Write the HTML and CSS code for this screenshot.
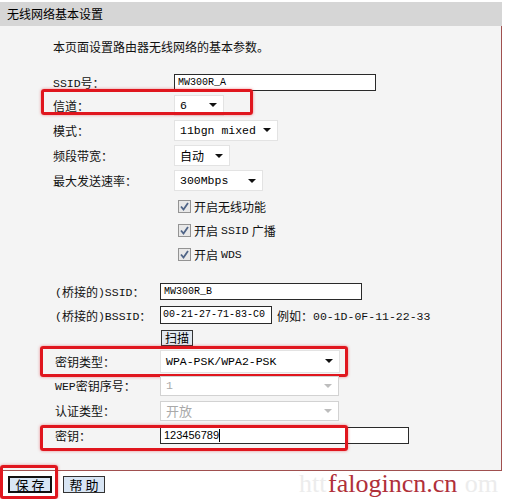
FILE: index.html
```html
<!DOCTYPE html>
<html lang="zh-CN">
<head>
    <meta charset="UTF-8">
    <title>无线网络基本设置</title>
    <link rel="stylesheet" href="styles.css">
</head>
<body>
    <div class="panel">
        <div class="title">无线网络基本设置</div>
        <div class="content">
            <p class="intro">本页面设置路由器无线网络的基本参数。</p>

            <div class="form form-main">
                <div class="row">
                    <span class="label"><span class="en">SSID</span>号：</span>
                    <div class="text w-ssid">MW300R_A</div>
                </div>
                <div class="row mark mark-channel">
                    <span class="label">信道：</span>
                    <div class="sel w-channel"><span>6</span><i class="arrow"></i></div>
                </div>
                <div class="row">
                    <span class="label">模式：</span>
                    <div class="sel w-mode"><span>11bgn mixed</span><i class="arrow"></i></div>
                </div>
                <div class="row">
                    <span class="label">频段带宽：</span>
                    <div class="sel w-band"><span class="cjk">自动</span><i class="arrow"></i></div>
                </div>
                <div class="row">
                    <span class="label">最大发送速率：</span>
                    <div class="sel w-rate"><span>300Mbps</span><i class="arrow"></i></div>
                </div>
                <div class="row">
                    <span class="label"></span>
                    <span class="check"><svg width="13" height="13" viewBox="0 0 13 13"><rect x="0.5" y="0.5" width="12" height="12" fill="#e8e8e8" stroke="#939393"/><path d="M3 6.5 L5.5 9.5 L10 3" fill="none" stroke="#4f6487" stroke-width="1.8"/></svg>开启无线功能</span>
                </div>
                <div class="row">
                    <span class="label"></span>
                    <span class="check"><svg width="13" height="13" viewBox="0 0 13 13"><rect x="0.5" y="0.5" width="12" height="12" fill="#e8e8e8" stroke="#939393"/><path d="M3 6.5 L5.5 9.5 L10 3" fill="none" stroke="#4f6487" stroke-width="1.8"/></svg>开启<span class="en">SSID</span>广播</span>
                </div>
                <div class="row">
                    <span class="label"></span>
                    <span class="check"><svg width="13" height="13" viewBox="0 0 13 13"><rect x="0.5" y="0.5" width="12" height="12" fill="#e8e8e8" stroke="#939393"/><path d="M3 6.5 L5.5 9.5 L10 3" fill="none" stroke="#4f6487" stroke-width="1.8"/></svg>开启<span class="en">WDS</span></span>
                </div>
            </div>

            <div class="form form-bridge">
                <div class="row">
                    <span class="label"><span class="en">(</span>桥接的<span class="en">)SSID</span>：</span>
                    <div class="text w-bssid-name">MW300R_B</div>
                </div>
                <div class="row">
                    <span class="label"><span class="en">(</span>桥接的<span class="en">)BSSID</span>：</span>
                    <div class="text w-bssid">00-21-27-71-83-C0</div>
                    <span class="hint">例如：<span class="en">00-1D-0F-11-22-33</span></span>
                </div>
                <div class="row">
                    <span class="label"></span>
                    <button class="btn btn-scan">扫描</button>
                </div>
                <div class="row mark mark-type">
                    <span class="label">密钥类型：</span>
                    <div class="sel w-type"><span>WPA-PSK/WPA2-PSK</span><i class="arrow"></i></div>
                </div>
                <div class="row">
                    <span class="label"><span class="en">WEP</span>密钥序号：</span>
                    <div class="sel sel-off w-wep"><span>1</span><i class="arrow"></i></div>
                </div>
                <div class="row">
                    <span class="label">认证类型：</span>
                    <div class="sel sel-off w-auth"><span class="cjk">开放</span><i class="arrow"></i></div>
                </div>
                <div class="row mark mark-key">
                    <span class="label">密钥：</span>
                    <div class="text text-key w-key">123456789<i class="caret"></i></div>
                </div>
            </div>
        </div>

        <div class="footer">
            <button class="btn btn-save">保 存</button>
            <button class="btn btn-help">帮 助</button>
            <div class="watermark">
                <span class="wm-faint">htt</span>
                <span class="wm-faint wm-end">om</span>
                <span class="wm-text">falogincn.cn</span>
            </div>
        </div>
    </div>
</body>
</html>
```

FILE: styles.css
```css
body {
    margin: 0;
    background: #fff;
    color: #111;
    font-family: "Noto Sans CJK SC", sans-serif;
    font-size: 12px;
}
.panel {
    width: 502px;
    padding-top: 2px;
}
.title {
    height: 24px;
    line-height: 24px;
    padding-left: 7px;
    background: #d6d6d6;
    color: #000;
}
.content {
    background: #f4f4f4;
    border-right: 1px solid #a0504f;
    border-bottom: 1px solid #a0504f;
    padding: 12px 0 22px;
}
.intro {
    margin: 0 0 15px 53px;
    line-height: 18px;
}
.en {
    font-family: "Liberation Mono", monospace;
    font-size: 11.5px;
    vertical-align: 1px;
}
.form {
    display: grid;
}
.form-main {
    grid-template-rows: 22px 24px 26px 25px 25px 26px 23px 24px;
    padding-left: 53px;
}
.form-bridge {
    grid-template-rows: 24px 24px 22px 24px 25px 25px 25px;
    padding-left: 55px;
    margin-top: 13px;
}
.row {
    display: flex;
    align-items: center;
    position: relative;
}
.form-main .label {
    width: 121px;
}
.form-bridge .label {
    width: 105px;
}

/* text inputs */
.text {
    box-sizing: border-box;
    height: 17px;
    line-height: 15px;
    padding: 0 3px;
    background: #fff;
    border: 1px solid #2a2a2a;
    font-family: "Liberation Mono", monospace;
    font-size: 10px;
    color: #000;
    white-space: nowrap;
    overflow: hidden;
}
.text-key {
    font-family: "Liberation Sans", sans-serif;
    font-size: 11px;
}
.caret {
    display: inline-block;
    width: 1px;
    height: 13px;
    background: #000;
    vertical-align: -3px;
}
.w-ssid { width: 202px; }
.w-bssid-name { width: 202px; }
.w-bssid { width: 112px; height: 18px; line-height: 16px; padding: 0 2px; }
.w-key { width: 249px; }
.hint {
    margin-left: 5px;
    white-space: nowrap;
}

/* selects */
.sel {
    box-sizing: border-box;
    display: flex;
    align-items: center;
    justify-content: space-between;
    height: 21px;
    padding: 0 6px 0 5px;
    background: #fff;
    border: 1px solid #e3e3e3;
    font-family: "Liberation Mono", "Noto Sans CJK SC", monospace;
    font-size: 11.5px;
    color: #000;
}
.sel .cjk {
    font-family: "Noto Sans CJK SC", sans-serif;
    font-size: 12px;
}
.arrow {
    width: 0;
    height: 0;
    border-left: 4px solid transparent;
    border-right: 4px solid transparent;
    border-top: 4px solid #111;
}
.sel-off {
    height: 20px;
    color: #a9a9a9;
    border-color: #d2d2d2;
}
.sel-off .cjk {
    font-size: 13px;
}
.sel-off .arrow {
    border-top-color: #bdbdbd;
}
.w-channel { width: 50px; }
.w-mode { width: 104px; }
.w-band { width: 56px; }
.w-rate { width: 89px; }
.w-type { width: 180px; height: 23px; }
.w-wep { width: 179px; }
.w-auth { width: 179px; }

/* checkboxes */
.check {
    display: flex;
    align-items: center;
    gap: 3px;
    margin-left: 4px;
}

/* buttons */
.btn {
    box-sizing: border-box;
    height: 17px;
    padding: 0;
    background: #d8e5f4;
    border: 1px solid #333;
    font-family: "Noto Sans CJK SC", sans-serif;
    font-size: 13px;
    line-height: 14px;
    color: #000;
}
.btn-scan {
    width: 32px;
    height: 16px;
    margin-left: 1px;
    font-size: 12px;
    background: #e2e9f1;
}
.btn-save {
    width: 44px;
    border: 2px solid #111;
}
.btn-help {
    width: 42px;
}

/* red annotation frames */
.mark::after,
.btn-save::after {
    content: "";
    position: absolute;
    border: 3px solid #e0161e;
    border-radius: 3px;
    box-shadow: 0 0 3px rgba(224, 22, 30, 0.5);
}
.mark-channel::after {
    left: -12px;
    top: -4px;
    bottom: 2px;
    width: 206px;
}
.mark-type::after {
    left: -15px;
    top: -3px;
    bottom: -4px;
    width: 302px;
}
.mark-key::after {
    left: -15px;
    top: 2px;
    bottom: -3px;
    width: 302px;
}
.btn-save {
    position: relative;
}
.btn-save::after {
    left: -10px;
    top: -13px;
    width: 52px;
    height: 28px;
}

/* footer */
.footer {
    position: relative;
    box-sizing: border-box;
    height: 28px;
    padding: 5px 0 0 8px;
    display: flex;
    align-items: flex-start;
    gap: 11px;
}
.watermark {
    position: absolute;
    left: 285px;
    top: 2px;
    width: 215px;
    height: 26px;
    background: #fff;
    font-family: "Liberation Serif", serif;
    font-size: 26px;
    line-height: 26px;
}
.wm-faint {
    position: absolute;
    left: 14px;
    top: -2px;
    color: #ececec;
}
.wm-end {
    left: auto;
    right: 2px;
}
.wm-text {
    position: absolute;
    left: 43px;
    top: -2px;
    color: #b0303a;
}
```
